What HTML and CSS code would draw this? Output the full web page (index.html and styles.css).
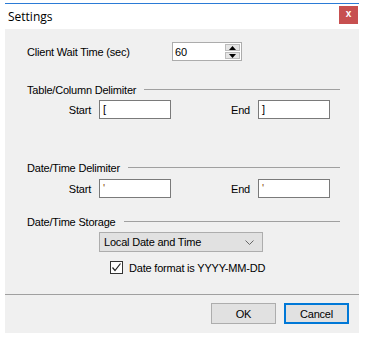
FILE: index.html
```html
<!DOCTYPE html>
<html lang="en">
<head>
<meta charset="UTF-8">
<title>Settings</title>
<link rel="stylesheet" href="styles.css">
</head>
<body>

<div class="window">
  <div class="titlebar">
    <span class="title">Settings</span>
    <span class="close">x</span>
  </div>

  <div class="content">
    <div class="row wait-row">
      <span class="wait-label">Client Wait Time (sec)</span>
      <div class="spinner">
        <span class="spin-value">60</span>
        <div class="spin-buttons">
          <span class="spin-btn"><svg width="7" height="4" viewBox="0 0 7 4"><polygon points="0,4 7,4 3.5,0" fill="#000"/></svg></span>
          <span class="spin-btn"><svg width="7" height="4" viewBox="0 0 7 4"><polygon points="0,0 7,0 3.5,4" fill="#000"/></svg></span>
        </div>
      </div>
    </div>

    <div class="heading h-first">
      <span>Table/Column Delimiter</span>
      <span class="rule"></span>
    </div>
    <div class="row fields f-first">
      <label class="field"><span class="field-label">Start</span><span class="textbox">[</span></label>
      <label class="field"><span class="field-label">End</span><span class="textbox">]</span></label>
    </div>

    <div class="heading h-second">
      <span>Date/Time Delimiter</span>
      <span class="rule"></span>
    </div>
    <div class="row fields f-second">
      <label class="field"><span class="field-label">Start</span><span class="textbox quote">'</span></label>
      <label class="field"><span class="field-label">End</span><span class="textbox quote">'</span></label>
    </div>

    <div class="heading h-third">
      <span>Date/Time Storage</span>
      <span class="rule"></span>
    </div>
    <div class="row">
      <div class="combo">
        <span>Local Date and Time</span>
        <svg width="9" height="5" viewBox="0 0 9 5"><polyline points="0.5,0.5 4.5,4.5 8.5,0.5" fill="none" stroke="#666" stroke-width="1"/></svg>
      </div>
    </div>
    <div class="row check-row">
      <span class="checkbox"><svg width="11" height="11" viewBox="0 0 11 11"><polyline points="1.5,5.5 4,8.5 9.5,1.5" fill="none" stroke="#222" stroke-width="1.2"/></svg></span>
      <span>Date format is YYYY-MM-DD</span>
    </div>
  </div>

  <div class="footer">
    <button class="btn">OK</button>
    <button class="btn btn-focus">Cancel</button>
  </div>
</div>

</body>
</html>
```

FILE: styles.css
```css
body {
  margin: 0;
  background: #fff;
  font-family: "Liberation Sans", Arial, sans-serif;
  font-size: 11px;
  letter-spacing: -0.2px;
  color: #000;
}
.window {
  width: 354px;
  margin: 3px 0 0 5px;
  border-top: 1px solid #2b7bd6;
}
.titlebar {
  height: 25px;
  background: #fff;
  display: flex;
  align-items: flex-start;
  justify-content: space-between;
}
.title {
  font-family: "Open Sans", "Noto Sans", sans-serif;
  font-size: 12px;
  letter-spacing: 0;
  padding: 4px 0 0 3px;
}
.close {
  width: 19px;
  height: 18px;
  margin: 2px 1px 0 0;
  background: #c75050;
  color: #fff;
  font-weight: bold;
  font-size: 10px;
  line-height: 16px;
  text-align: center;
}
.content {
  background: #f0f0f0;
  height: 266px;
  padding-top: 13px;
  box-sizing: border-box;
  border-bottom: 1px solid #a0a0a0;
}
.row {
  display: flex;
  align-items: center;
}
.wait-row {
  padding-left: 22px;
  height: 19px;
}
.wait-label {
  width: 145px;
}
.spinner {
  width: 70px;
  height: 19px;
  box-sizing: border-box;
  border: 1px solid #acacac;
  background: #fff;
  display: flex;
  justify-content: space-between;
}
.spin-value {
  padding: 3px 0 0 2px;
}
.spin-buttons {
  width: 15px;
  display: flex;
  flex-direction: column;
  padding: 1px 1px 1px 0;
  gap: 1px;
}
.spin-btn {
  flex: 1;
  background: #e5e5e5;
  border: 1px solid #bcbcbc;
  display: flex;
  align-items: center;
  justify-content: center;
}
.heading {
  display: flex;
  align-items: center;
  height: 13px;
  padding-left: 22px;
  padding-right: 19px;
}
.rule {
  flex: 1;
  height: 1px;
  background: #a0a0a0;
  margin-left: 8px;
}
.h-first { margin-top: 22px; }
.h-second { margin-top: 42px; }
.h-third { margin-top: 17px; }
.fields {
  padding-left: 46px;
  gap: 39px;
  height: 19px;
}
.f-first { margin-top: 4px; }
.f-second { margin-top: 5px; }
.field {
  display: flex;
  align-items: center;
}
.field-label {
  width: 40px;
  text-align: right;
  margin-right: 8px;
}
.textbox {
  width: 72px;
  height: 19px;
  box-sizing: border-box;
  border: 1px solid #7a7a7a;
  background: #fff;
  padding: 2px 0 0 3px;
}
.quote {
  color: #8a4a14;
}
.combo {
  margin: 4px 0 0 94px;
  width: 164px;
  height: 20px;
  box-sizing: border-box;
  border: 1px solid #adadad;
  background: #e1e1e1;
  display: flex;
  align-items: center;
  justify-content: space-between;
  padding: 0 8px 0 4px;
}
.check-row {
  margin-top: 9px;
  padding-left: 105px;
}
.checkbox {
  width: 13px;
  height: 13px;
  box-sizing: border-box;
  border: 1px solid #333;
  background: #fff;
  margin-right: 6px;
  display: flex;
  align-items: center;
  justify-content: center;
}
.footer {
  background: #f0f0f0;
  height: 38px;
  display: flex;
  justify-content: flex-end;
  align-items: flex-start;
  gap: 8px;
  padding: 8px 10px 0 0;
  box-sizing: border-box;
}
.btn {
  width: 65px;
  height: 21px;
  font-family: "Liberation Sans", Arial, sans-serif;
  font-size: 11px;
  letter-spacing: -0.2px;
  background: #e1e1e1;
  border: 1px solid #adadad;
  padding: 0;
  color: #000;
}
.btn-focus {
  border: 2px solid #0078d7;
}
```
